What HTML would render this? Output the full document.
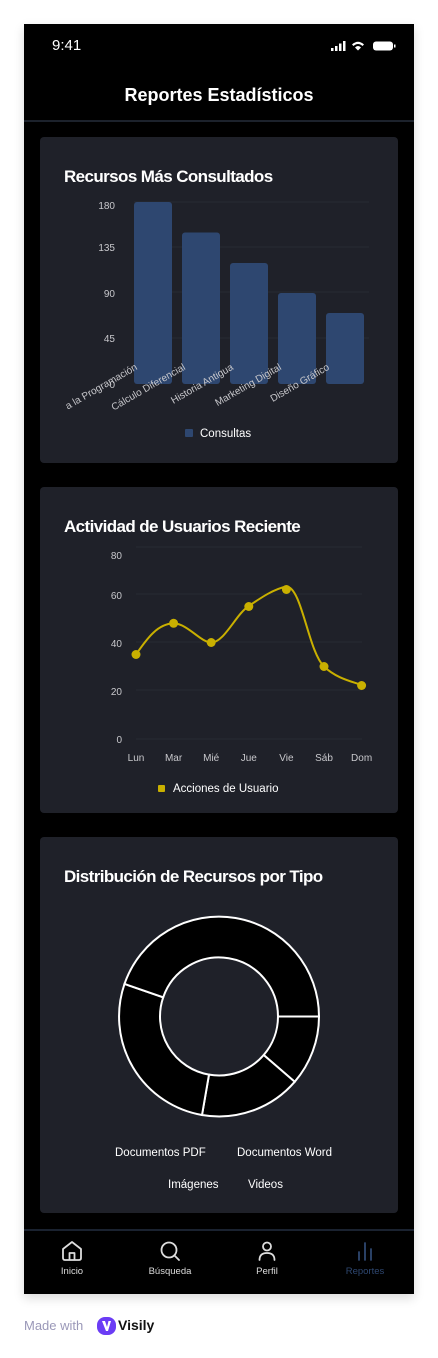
<!DOCTYPE html>
<html><head><meta charset="utf-8"><style>
*{margin:0;padding:0;box-sizing:border-box}
body{width:438px;height:1358px;background:#fff;position:relative;font-family:"Liberation Sans",sans-serif;overflow:hidden}
.phone{position:absolute;left:24px;top:24px;width:390px;height:1270px;background:#000;box-shadow:0 4px 10px rgba(0,0,0,.15)}
.card{position:absolute;left:16px;width:358px;background:#1f2129;border-radius:4px}
.t{position:absolute;left:24px;color:#fff;font-weight:bold;font-size:17px;letter-spacing:-0.6px}
svg text{font-family:"Liberation Sans",sans-serif}
.nav{position:absolute;left:0;top:1205px;width:390px;height:65px;border-top:2px solid #1a2230}
.ni{position:absolute;top:8px;width:80px;text-align:center;font-size:9.5px;color:#ddd}
.ni svg{display:block;margin:0 auto 3px}
</style></head><body>
<div class="phone">
 <div style="position:absolute;left:28px;top:13px;color:#fff;font-size:15px">9:41</div>
 <svg style="position:absolute;left:306px;top:16px" width="66" height="12">
  <rect x="1" y="8" width="2.5" height="3" fill="#fff"/><rect x="5" y="6" width="2.5" height="5" fill="#fff"/><rect x="9" y="3.5" width="2.5" height="7.5" fill="#fff"/><rect x="13" y="1" width="2.5" height="10" fill="#fff"/>
  <path d="M22 4.5 Q28 -1 34 4.5 L32.5 6 Q28 2 23.5 6Z M25 7.5 Q28 4.5 31 7.5 L28 10.5Z" fill="#fff"/>
  <rect x="43" y="1.5" width="20" height="9" rx="3" fill="#fff"/><rect x="64" y="4.5" width="1.5" height="3" fill="#fff"/>
 </svg>
 <div style="position:absolute;left:0;width:390px;top:61px;text-align:center;color:#fff;font-weight:bold;font-size:18px">Reportes Estadísticos</div>
 <div style="position:absolute;left:0;top:96px;width:390px;height:2px;background:#1c222c"></div>

 <div class="card" style="top:113px;height:326px">
  <div class="t" style="top:30px">Recursos Más Consultados</div>
  <svg style="position:absolute;left:0;top:0" width="358" height="326">
   <g stroke="#272a33" stroke-width="1"><line x1="94" y1="65" x2="329" y2="65"/><line x1="94" y1="110" x2="329" y2="110"/><line x1="94" y1="155" x2="329" y2="155"/><line x1="94" y1="201" x2="329" y2="201"/></g>
   <g fill="#c8c8cc" font-size="10" text-anchor="end"><text x="75" y="72">180</text><text x="75" y="114">135</text><text x="75" y="160">90</text><text x="75" y="205">45</text><text x="75" y="251">0</text></g>
   <g fill="#2e4770"><rect x="94" y="65" width="38" height="182" rx="3"/><rect x="142" y="95.5" width="38" height="151.5" rx="3"/><rect x="190" y="126" width="38" height="121" rx="3"/><rect x="238" y="156" width="38" height="91" rx="3"/><rect x="286" y="176" width="38" height="71" rx="3"/></g>
   <g fill="#c8c8cc" font-size="10" text-anchor="end">
    <text transform="translate(98,232) rotate(-30)">a la Programación</text>
    <text transform="translate(146,232) rotate(-30)">Cálculo Diferencial</text>
    <text transform="translate(194,232) rotate(-30)">Historia Antigua</text>
    <text transform="translate(242,232) rotate(-30)">Marketing Digital</text>
    <text transform="translate(290,232) rotate(-30)">Diseño Gráfico</text>
   </g>
   <rect x="145" y="292" width="8" height="8" rx="1" fill="#2e4770"/>
   <text x="160" y="300" fill="#fff" font-size="11.5">Consultas</text>
  </svg>
 </div>

 <div class="card" style="top:463px;height:326px">
  <div class="t" style="top:30px">Actividad de Usuarios Reciente</div>
  <svg style="position:absolute;left:0;top:0" width="358" height="326">
   <g stroke="#272a33"><line x1="96" y1="60" x2="322" y2="60"/><line x1="96" y1="107" x2="322" y2="107"/><line x1="96" y1="155" x2="322" y2="155"/><line x1="96" y1="203" x2="322" y2="203"/><line x1="96" y1="252" x2="322" y2="252"/></g>
   <g fill="#c8c8cc" font-size="10" text-anchor="end"><text x="82" y="72">80</text><text x="82" y="112">60</text><text x="82" y="160">40</text><text x="82" y="208">20</text><text x="82" y="256">0</text></g>
   <path d="M96 167.5 C108 150,118 137,133.6 136.3 C148 137,160 155,171.2 155.5 C184 156,196 127,208.8 119 C222 110,234 102,246.4 99.5 C262 100,268 164,284 179.5 C296 191,310 194,321.6 198" fill="none" stroke="#c9b000" stroke-width="2"/>
   <g fill="#c9b000"><circle cx="96" cy="167.5" r="4.5"/><circle cx="133.6" cy="136.3" r="4.5"/><circle cx="171.2" cy="155.5" r="4.5"/><circle cx="208.8" cy="119.5" r="4.5"/><circle cx="246.4" cy="102.5" r="4.5"/><circle cx="284" cy="179.5" r="4.5"/><circle cx="321.6" cy="198.5" r="4.5"/></g>
   <g fill="#c8c8cc" font-size="10" text-anchor="middle"><text x="96" y="274">Lun</text><text x="133.6" y="274">Mar</text><text x="171.2" y="274">Mié</text><text x="208.8" y="274">Jue</text><text x="246.4" y="274">Vie</text><text x="284" y="274">Sáb</text><text x="321.6" y="274">Dom</text></g>
   <rect x="118" y="298" width="7" height="7" rx="1" fill="#c9b000"/>
   <text x="133" y="305" fill="#fff" font-size="11.5">Acciones de Usuario</text>
  </svg>
 </div>

 <div class="card" style="top:813px;height:376px">
  <div class="t" style="top:30px">Distribución de Recursos por Tipo</div>
  <svg style="position:absolute;left:0;top:0" width="358" height="376">
   <g transform="translate(179,179.5)" fill="#000" stroke="#fff" stroke-width="2">
    <path d="M100 0 A100 100 0 0 1 75.7 65.3 L44.7 38.5 A59 59 0 0 0 59 0Z"/>
    <path d="M75.7 65.3 A100 100 0 0 1 -17 98.5 L-10 58.1 A59 59 0 0 0 44.7 38.5Z"/>
    <path d="M-17 98.5 A100 100 0 0 1 -94.5 -32.6 L-55.8 -19.2 A59 59 0 0 0 -10 58.1Z"/>
    <path d="M-94.5 -32.6 A100 100 0 0 1 100 0 L59 0 A59 59 0 0 0 -55.8 -19.2Z"/>
   </g>
   <g fill="#fff" font-size="11.5"><text x="75" y="319">Documentos PDF</text><text x="197" y="319">Documentos Word</text><text x="128" y="351">Imágenes</text><text x="208" y="351">Videos</text></g>
  </svg>
 </div>

 <div class="nav">
  <div class="ni" style="left:8px"><svg width="24" height="24" viewBox="0 0 24 24" fill="none" stroke="#ddd" stroke-width="1.8" stroke-linejoin="round"><path d="M3 10 L12 3 L21 10 V19 Q21 21 19 21 H5 Q3 21 3 19Z"/><path d="M9.5 21 V14 H14.5 V21"/></svg>Inicio</div>
  <div class="ni" style="left:106px"><svg width="24" height="24" viewBox="0 0 24 24" fill="none" stroke="#ddd" stroke-width="1.8" stroke-linecap="round"><circle cx="11" cy="11" r="7.5"/><path d="M16.5 16.5 L21 21"/></svg>Búsqueda</div>
  <div class="ni" style="left:203px"><svg width="24" height="24" viewBox="0 0 24 24" fill="none" stroke="#ddd" stroke-width="1.8" stroke-linecap="round"><circle cx="12" cy="7.5" r="4"/><path d="M4.5 21 Q4.5 14 12 14 Q19.5 14 19.5 21"/></svg>Perfil</div>
  <div class="ni" style="left:301px;color:#2e4770"><svg width="24" height="24" viewBox="0 0 24 24" fill="none" stroke="#2e4770" stroke-width="1.8" stroke-linecap="round"><path d="M6 21 V13 M12 21 V4 M18 21 V10"/></svg>Reportes</div>
 </div>
</div>
<div style="position:absolute;left:24px;top:1318px;font-size:13px;color:#9a98b8">Made with</div>
<svg style="position:absolute;left:97px;top:1317px" width="20" height="18"><rect x="0" y="0" width="19" height="18" rx="8" fill="#6b3cf5"/><path d="M5 4 L9 14 L11 14 L14 4 L11.5 4 L10 10 L8 4Z" fill="#fff"/></svg>
<div style="position:absolute;left:118px;top:1317px;font-size:14px;font-weight:bold;color:#111">Visily</div>
</body></html>
